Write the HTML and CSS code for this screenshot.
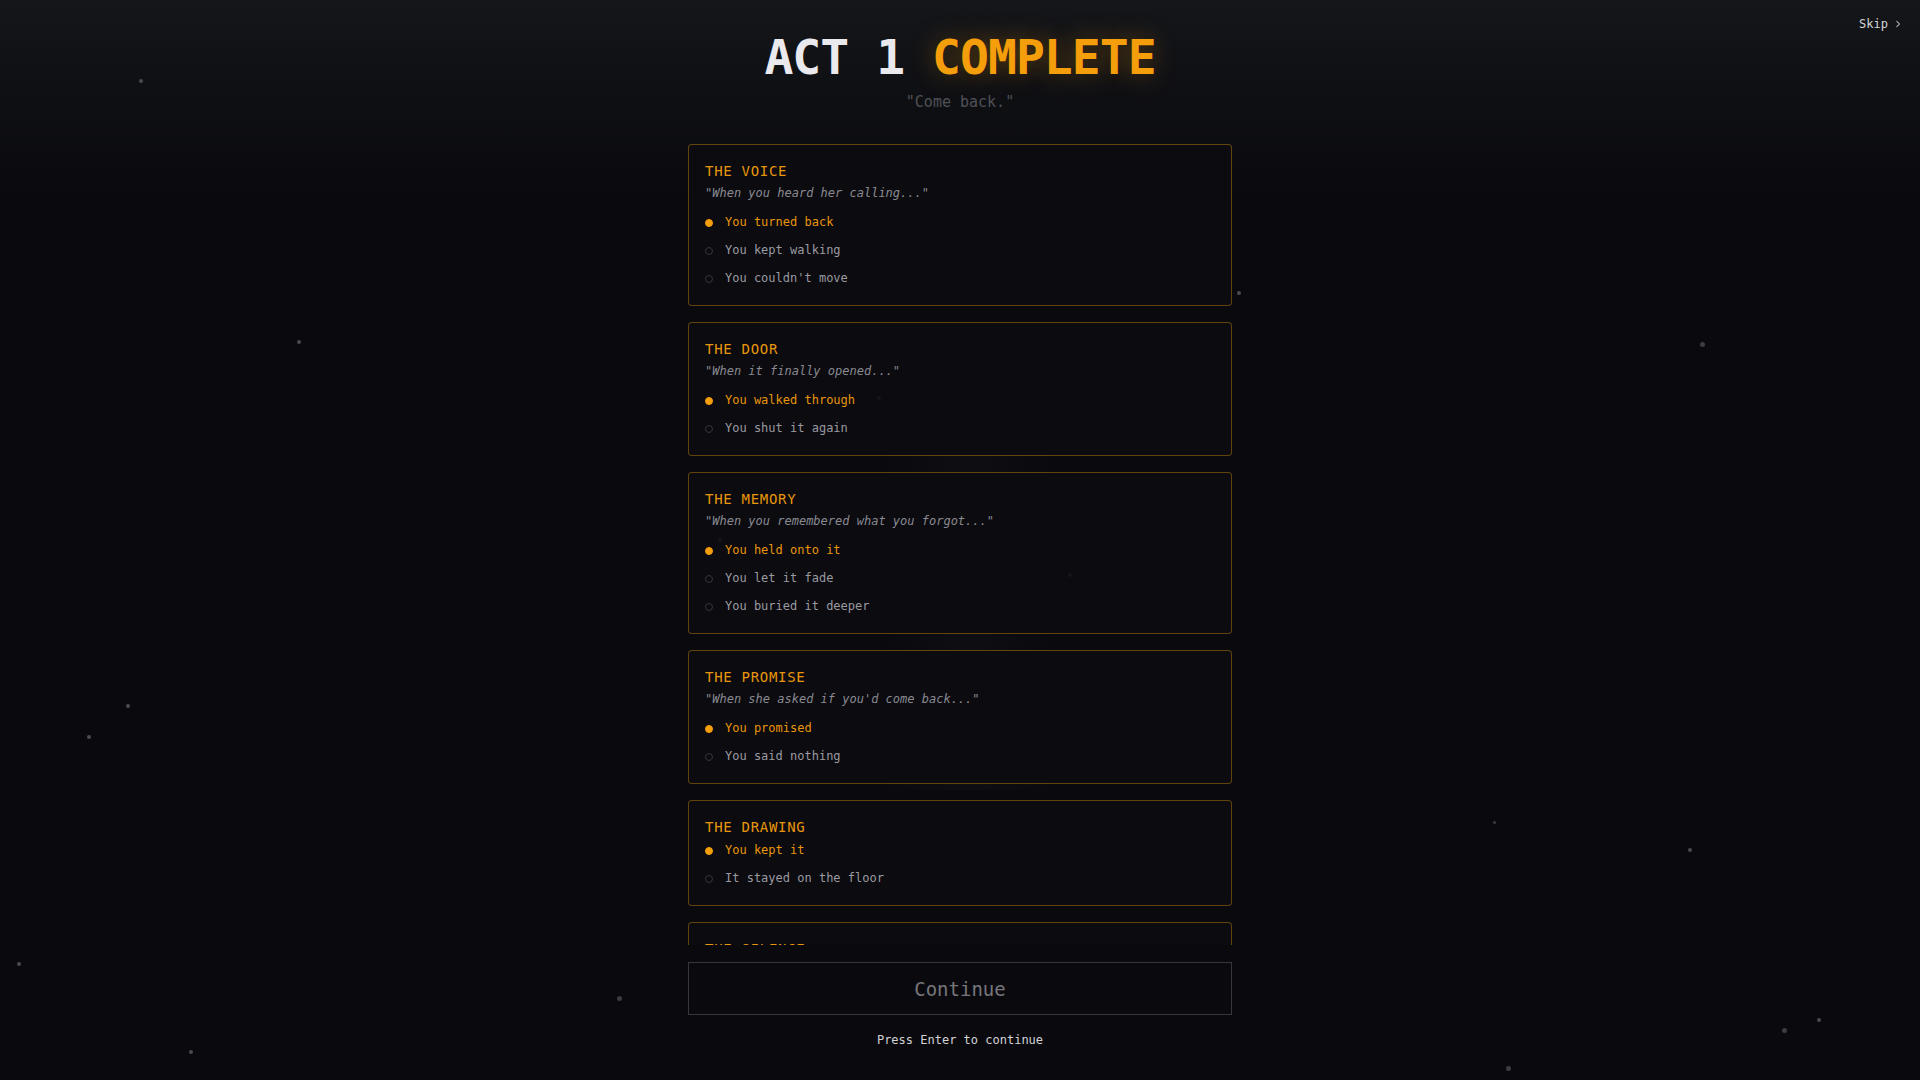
FILE: index.html
```html
<!DOCTYPE html>
<html lang="en">
<head>
<meta charset="utf-8">
<title>Act 1 Complete</title>
<link rel="stylesheet" href="styles.css">
</head>
<body>
<div class="scene">
  <div class="stars">
    <span class="star" style="left:141px;top:81px"></span>
    <span class="star" style="left:299px;top:342px"></span>
    <span class="star" style="left:1239px;top:293px"></span>
    <span class="star big" style="left:1702px;top:344px"></span>
    <span class="star" style="left:879px;top:398px"></span>
    <span class="star" style="left:720px;top:540px"></span>
    <span class="star" style="left:1070px;top:575px"></span>
    <span class="star" style="left:128px;top:706px"></span>
    <span class="star" style="left:89px;top:737px"></span>
    <span class="star small" style="left:1495px;top:823px"></span>
    <span class="star" style="left:1690px;top:850px"></span>
    <span class="star" style="left:19px;top:964px"></span>
    <span class="star big" style="left:619px;top:998px"></span>
    <span class="star" style="left:191px;top:1052px"></span>
    <span class="star big" style="left:1784px;top:1030px"></span>
    <span class="star" style="left:1819px;top:1020px"></span>
    <span class="star big" style="left:1508px;top:1068px"></span>
  </div>
  <div class="silhouette"></div>

  <button class="skip">Skip <svg width="8" height="8" viewBox="0 0 8 8"><path d="M2.5 1 L5.5 4 L2.5 7" fill="none" stroke="currentColor" stroke-width="1.1"/></svg></button>

  <main class="summary">
    <h1 class="title">ACT 1 <span class="accent">COMPLETE</span></h1>
    <p class="subtitle">"Come back."</p>

    <div class="choices">
      <section class="card">
        <h2 class="card-title">THE VOICE</h2>
        <p class="card-quote">"When you heard her calling..."</p>
        <ul class="options">
          <li class="option chosen"><span class="dot"></span>You turned back</li>
          <li class="option"><span class="dot"></span>You kept walking</li>
          <li class="option"><span class="dot"></span>You couldn't move</li>
        </ul>
      </section>

      <section class="card">
        <h2 class="card-title">THE DOOR</h2>
        <p class="card-quote">"When it finally opened..."</p>
        <ul class="options">
          <li class="option chosen"><span class="dot"></span>You walked through</li>
          <li class="option"><span class="dot"></span>You shut it again</li>
        </ul>
      </section>

      <section class="card">
        <h2 class="card-title">THE MEMORY</h2>
        <p class="card-quote">"When you remembered what you forgot..."</p>
        <ul class="options">
          <li class="option chosen"><span class="dot"></span>You held onto it</li>
          <li class="option"><span class="dot"></span>You let it fade</li>
          <li class="option"><span class="dot"></span>You buried it deeper</li>
        </ul>
      </section>

      <section class="card">
        <h2 class="card-title">THE PROMISE</h2>
        <p class="card-quote">"When she asked if you'd come back..."</p>
        <ul class="options">
          <li class="option chosen"><span class="dot"></span>You promised</li>
          <li class="option"><span class="dot"></span>You said nothing</li>
        </ul>
      </section>

      <section class="card">
        <h2 class="card-title">THE DRAWING</h2>
        <ul class="options">
          <li class="option chosen"><span class="dot"></span>You kept it</li>
          <li class="option"><span class="dot"></span>It stayed on the floor</li>
        </ul>
      </section>

      <section class="card">
        <h2 class="card-title">THE SILENCE</h2>
        <ul class="options">
          <li class="option chosen"><span class="dot"></span>You listened</li>
          <li class="option"><span class="dot"></span>You spoke</li>
        </ul>
      </section>
    </div>

    <button class="continue">Continue</button>
    <p class="hint">Press Enter to continue</p>
  </main>
</div>
</body>
</html>
```

FILE: styles.css
```css
* { box-sizing: border-box; }

html, body {
  margin: 0;
  padding: 0;
  height: 100%;
}

body {
  background: #0a0a0e;
  font-family: "DejaVu Sans Mono", "Liberation Mono", monospace;
  color: #cfcfd4;
  overflow: hidden;
}

.scene {
  position: relative;
  width: 100%;
  height: 100vh;
  background: linear-gradient(180deg, #14161a 0px, #0f1014 90px, #0a0a0e 200px, #0a0a0e 100%);
  overflow: hidden;
}

.stars {
  position: absolute;
  inset: 0;
  pointer-events: none;
}

.star {
  position: absolute;
  width: 4px;
  height: 4px;
  margin: -2px 0 0 -2px;
  border-radius: 50%;
  background: #4a4b50;
}
.star.big { width: 5px; height: 5px; background: #3c3d42; }
.star.small { width: 3px; height: 3px; background: #3a3b40; }

.silhouette {
  position: absolute;
  left: 878px;
  top: 450px;
  width: 180px;
  height: 340px;
  background:
    linear-gradient(90deg, transparent 0, rgba(255,255,255,0.012) 30%, rgba(255,255,255,0.02) 50%, rgba(255,255,255,0.012) 70%, transparent 100%);
  pointer-events: none;
}

.skip {
  position: absolute;
  top: 15px;
  right: 18px;
  display: flex;
  align-items: center;
  gap: 6px;
  background: none;
  border: 0;
  padding: 0;
  font-family: inherit;
  font-size: 12px;
  line-height: 18px;
  color: #d6d6da;
  z-index: 2;
}
.skip svg { color: #9a9aa0; }

.summary {
  position: relative;
  z-index: 1;
  width: 544px;
  height: 100vh;
  margin: 0 auto;
  padding: 28px 0 31px;
  display: flex;
  flex-direction: column;
}

.title {
  margin: 0;
  text-align: center;
  font-size: 48px;
  line-height: 58px;
  font-weight: bold;
  color: #e9e9ee;
  letter-spacing: -0.02em;
  white-space: nowrap;
}
.accent {
  color: #f59e0b;
  text-shadow: 0 0 24px rgba(245, 158, 11, 0.35);
}

.subtitle {
  margin: 6px 0 0;
  text-align: center;
  font-size: 15px;
  line-height: 21px;
  color: #505156;
}

.choices {
  flex: 1 1 auto;
  min-height: 0;
  overflow: hidden;
  margin-top: 31px;
  display: flex;
  flex-direction: column;
  gap: 16px;
}

.card {
  flex: 0 0 auto;
  border: 1px solid rgba(245, 158, 11, 0.38);
  border-radius: 4px;
  background: rgba(12, 12, 17, 0.85);
  padding: 17px 16px 15px;
}

.card-title {
  margin: 0;
  font-size: 14px;
  line-height: 18px;
  font-weight: normal;
  letter-spacing: 0.05em;
  color: #e8960c;
}

.card-title + .options {
  margin-top: 2px;
}

.card-quote {
  margin: 4px 0 8px;
  font-size: 12px;
  line-height: 18px;
  font-style: italic;
  color: #8a8a90;
}

.options {
  list-style: none;
  margin: 0;
  padding: 0;
  display: flex;
  flex-direction: column;
  gap: 4px;
}

.option {
  display: flex;
  align-items: center;
  gap: 12px;
  font-size: 12px;
  line-height: 24px;
  color: #9a9aa0;
}
.option .dot {
  width: 8px;
  height: 8px;
  flex: 0 0 8px;
  border-radius: 50%;
  border: 1px solid #34343a;
  margin-top: 2px;
}
.option.chosen { color: #e8960c; }
.option.chosen .dot {
  background: #f59e0b;
  border-color: #f59e0b;
}

.continue {
  flex: 0 0 auto;
  margin-top: 17px;
  height: 53px;
  width: 100%;
  background: rgba(10, 10, 14, 0.9);
  border: 1px solid #36363b;
  font-family: inherit;
  font-size: 19px;
  color: #76767c;
  cursor: pointer;
}

.hint {
  margin: 16px 0 0;
  text-align: center;
  font-size: 12px;
  line-height: 18px;
  color: #d2d2d6;
}
```
